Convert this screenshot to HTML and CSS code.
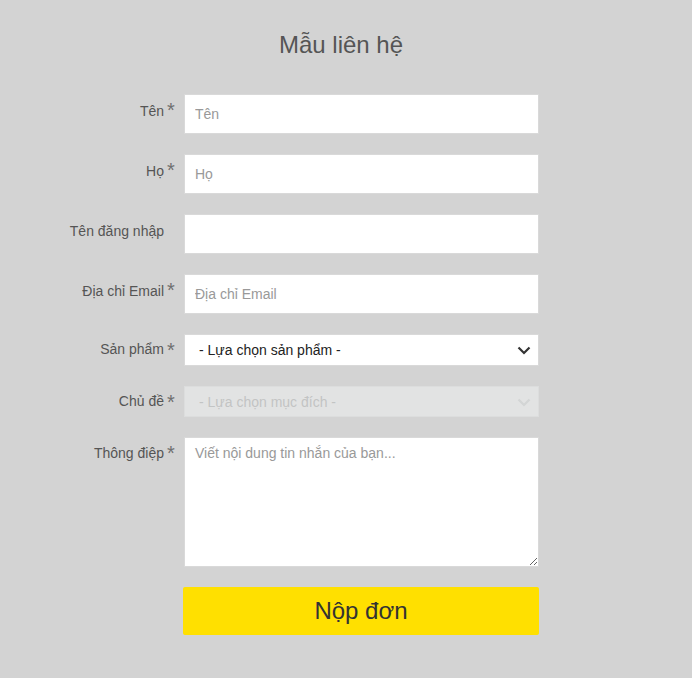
FILE: index.html
```html
<!DOCTYPE html>
<html lang="vi">
<head>
<meta charset="utf-8">
<title>Mẫu liên hệ</title>
<link rel="stylesheet" href="styles.css">
</head>
<body>
<div class="page">
  <h1 class="title">Mẫu liên hệ</h1>
  <form class="form">
    <label class="label req" for="fn">Tên</label>
    <input class="field" id="fn" type="text" placeholder="Tên">

    <label class="label req" for="ln">Họ</label>
    <input class="field" id="ln" type="text" placeholder="Họ">

    <label class="label" for="un">Tên đăng nhập</label>
    <input class="field" id="un" type="text">

    <label class="label req" for="em">Địa chỉ Email</label>
    <input class="field" id="em" type="email" placeholder="Địa chỉ Email">

    <label class="label label-sel req" for="pr">Sản phẩm</label>
    <div class="select-wrap">
      <select class="select" id="pr">
        <option>- Lựa chọn sản phẩm -</option>
      </select>
      <svg class="chev" width="14" height="9" viewBox="0 0 14 9"><path d="M1.5 1.5 L7 7 L12.5 1.5" fill="none" stroke="#333" stroke-width="2.2"/></svg>
    </div>

    <label class="label label-sel req" for="tp">Chủ đề</label>
    <div class="select-wrap">
      <select class="select" id="tp" disabled>
        <option>- Lựa chọn mục đích -</option>
      </select>
      <svg class="chev" width="14" height="9" viewBox="0 0 14 9"><path d="M1.5 1.5 L7 7 L12.5 1.5" fill="none" stroke="#d3d5d5" stroke-width="2.2"/></svg>
    </div>

    <label class="label label-ta req" for="ms">Thông điệp</label>
    <textarea class="area" id="ms" placeholder="Viết nội dung tin nhắn của bạn..."></textarea>

    <span></span>
    <button class="submit" type="button">Nộp đơn</button>
  </form>
</div>
</body>
</html>
```
FILE: styles.css
```css
html, body {
  margin: 0;
  padding: 0;
  background: #d3d3d3;
}
body {
  font-family: "Liberation Sans", Arial, sans-serif;
  font-size: 14px;
  color: #555;
}
.page {
  padding-top: 31px;
}
.title {
  margin: 0 10px 0 0;
  font-size: 24px;
  line-height: 28px;
  font-weight: normal;
  text-align: center;
  color: #555;
}
.form {
  display: grid;
  grid-template-columns: 124px 355px;
  column-gap: 20px;
  row-gap: 20px;
  margin: 35px 0 0 40px;
}
.label {
  position: relative;
  justify-self: end;
  padding-top: 7px;
  line-height: 20px;
  color: #555;
  white-space: nowrap;
}
.label-sel {
  padding-top: 5px;
}
.label-ta {
  padding-top: 6px;
}
.req::after {
  content: "*";
  position: absolute;
  left: calc(100% + 3px);
  top: 6px;
  font-size: 20px;
  line-height: 20px;
  color: #6f6f6f;
}
.field {
  box-sizing: border-box;
  width: 355px;
  height: 40px;
  margin: 0;
  padding: 0 10px;
  border: 1px solid #d9d9d9;
  background: #fff;
  font-family: inherit;
  font-size: 14px;
  color: #333;
  outline: none;
}
.field::placeholder, .area::placeholder {
  color: #999;
}
.select-wrap {
  position: relative;
  width: 355px;
}
.select {
  box-sizing: border-box;
  width: 355px;
  height: 32px;
  margin: 0;
  padding: 0 0 0 14px;
  border: 1px solid #d9d9d9;
  border-radius: 0;
  background: #fff;
  font-family: inherit;
  font-size: 14px;
  color: #222;
  appearance: none;
  -webkit-appearance: none;
  outline: none;
}
.select:disabled {
  height: 31px;
  background: #e2e3e3;
  border-color: #dcdddd;
  color: #c2c4c4;
  opacity: 1;
}
.chev {
  position: absolute;
  right: 8px;
  top: 12px;
  pointer-events: none;
}
.area {
  box-sizing: border-box;
  width: 355px;
  height: 130px;
  margin: 0;
  padding: 6px 10px;
  border: 1px solid #d9d9d9;
  background: #fff;
  font-family: inherit;
  font-size: 14px;
  line-height: 18px;
  color: #333;
  outline: none;
  resize: vertical;
  display: block;
}
.submit {
  width: 356px;
  height: 48px;
  margin: 0 0 0 -1px;
  padding: 0;
  border: 0;
  border-radius: 2px;
  background: #ffe000;
  font-family: inherit;
  font-size: 24px;
  color: #333;
  cursor: pointer;
}
```
